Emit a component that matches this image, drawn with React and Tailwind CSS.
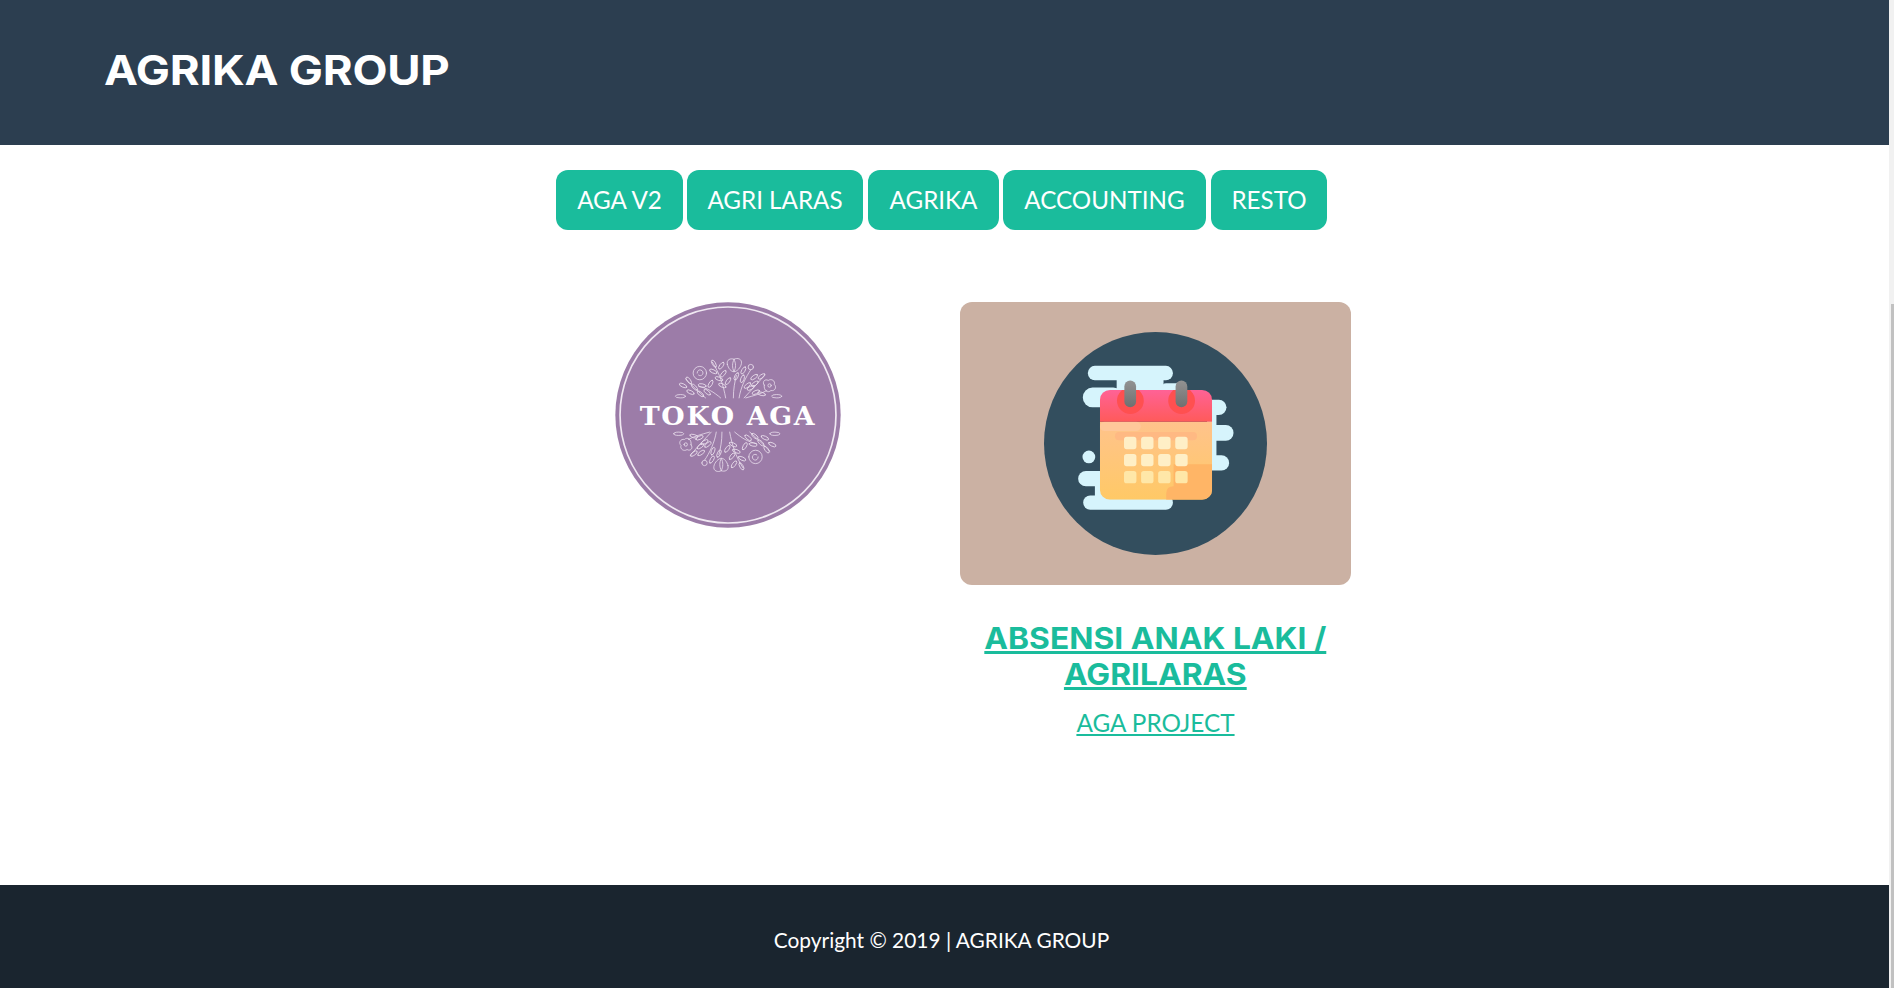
import React from "react";

const lato = "font-['Lato',sans-serif]";
const head = "font-['Inter',sans-serif]";

const leaves = [
  [340, 220, 60], [362, 226, -55], [338, 243, 25], [368, 250, -50], [355, 265, 20], [382, 272, -55], [365, 285, 25],
  [407, 258, -65],
  [428, 240, -60], [425, 265, -70], [460, 260, -35], [440, 285, -40],
  [482, 258, -35], [462, 280, -35], [450, 292, -30],
  [265, 270, 55], [248, 285, 25], [282, 290, 45], [270, 305, 25], [300, 310, 40],
  [305, 285, 10], [330, 280, -60], [320, 305, 40],
  [465, 305, -25], [482, 310, 15],
];

function FloralHalf() {
  return (
    <g fill="none" stroke="#e9deec" strokeWidth="2.4" strokeLinecap="round">
      <path d="M375 322C368 285 358 250 335 215" />
      <path d="M398 322C398 295 402 275 407 255" />
      <path d="M415 322C420 290 435 260 450 238" />
      <path d="M430 322C450 300 470 280 490 255" />
      <path d="M315 322C295 305 275 285 255 265" />
      <path d="M360 322C340 305 320 292 295 288" />
      <path d="M435 322C460 315 480 310 498 300" />
      {leaves.map(([x, y, r], i) => (
        <ellipse key={i} cx={x} cy={y} rx="12" ry="5" transform={`rotate(${r} ${x} ${y})`} />
      ))}
      <circle cx="298" cy="248" r="20" />
      <path d="M290 248c0-7 6-11 11-9 6 2 8 8 5 13-3 4-9 5-12 2" />
      <path d="M380 222c-4-15 11-19 20-15 10-6 25-1 22 13-2 12-14 24-22 24-9 0-17-10-20-22Z" />
      <path d="M400 207c-6 12-6 24 0 37 6-13 6-25 0-37Z" />
      <circle cx="450" cy="230" r="8" />
      <path d="M490 284c-8-10 3-20 12-14 10-7 22 2 18 12 9 8 1 21-10 18-8 8-22 2-20-16Z" />
      <circle cx="506" cy="285" r="5" />
      <ellipse cx="240" cy="317" rx="15" ry="5" />
      <ellipse cx="527" cy="317" rx="15" ry="5" />
    </g>
  );
}

function TokoAgaLogo() {
  return (
    <svg width="226" height="226" viewBox="45 36 674 674" className="block">
      <circle cx="382" cy="373" r="336" fill="#9c7ca8" />
      <circle cx="382" cy="373" r="322" fill="none" stroke="#f0e8f2" strokeWidth="5" />
      <FloralHalf />
      <g transform="rotate(180 381 373)">
        <FloralHalf />
      </g>
      <text
        x="382"
        y="404"
        textAnchor="middle"
        fill="#ffffff"
        fontFamily="'DejaVu Serif','Liberation Serif',serif"
        fontWeight="700"
        fontSize="80"
        letterSpacing="5"
      >
        TOKO AGA
      </text>
    </svg>
  );
}

function CalendarIcon() {
  const xs = [312, 363, 414, 465];
  const ys = [350, 401, 452];
  return (
    <svg width="223" height="223" viewBox="73 37 666 666" className="block">
      <defs>
        <linearGradient id="top" x1="0" y1="0" x2="0" y2="1">
          <stop offset="0" stopColor="#ff6296" />
          <stop offset="1" stopColor="#ff5a5a" />
        </linearGradient>
        <linearGradient id="body" x1="0" y1="0" x2="0" y2="1">
          <stop offset="0" stopColor="#ffc38c" />
          <stop offset="1" stopColor="#ffc966" />
        </linearGradient>
        <linearGradient id="pin" x1="0" y1="0" x2="0" y2="1">
          <stop offset="0" stopColor="#929292" />
          <stop offset="1" stopColor="#707070" />
        </linearGradient>
        <clipPath id="cal">
          <rect x="240" y="210" width="335" height="328" rx="30" />
        </clipPath>
      </defs>
      <circle cx="406" cy="370" r="333" fill="#334e5e" />
      <g fill="#d6f4fc">
        <rect x="204" y="138" width="254" height="43" rx="21" />
        <rect x="290" y="170" width="140" height="50" />
        <rect x="189" y="203" width="120" height="59" rx="29" />
        <rect x="423" y="190" width="60" height="30" rx="15" />
        <rect x="550" y="239" width="68" height="46" rx="23" />
        <rect x="550" y="315" width="89" height="47" rx="23" />
        <rect x="550" y="405" width="76" height="46" rx="23" />
        <rect x="560" y="262" width="28" height="166" />
        <circle cx="207" cy="410" r="19" />
        <rect x="175" y="452" width="100" height="46" rx="23" />
        <rect x="190" y="525" width="268" height="43" rx="21" />
        <rect x="225" y="480" width="40" height="60" />
      </g>
      <g clipPath="url(#cal)">
        <rect x="240" y="305" width="335" height="233" fill="url(#body)" />
        <rect x="240" y="305" width="122" height="28" rx="14" fill="#ffc89a" />
        <rect x="285" y="336" width="245" height="24" rx="12" fill="#ffb983" />
        <path d="M460 432H575V538H438V520Q438 498 460 498Z" fill="#ffb566" />
        <rect x="240" y="210" width="335" height="95" fill="url(#top)" />
        <circle cx="331" cy="242" r="40" fill="#ff5050" />
        <circle cx="484" cy="242" r="40" fill="#ff5050" />
      </g>
      <rect x="313" y="182" width="35" height="80" rx="17.5" fill="url(#pin)" />
      <rect x="466" y="182" width="35" height="80" rx="17.5" fill="url(#pin)" />
      {ys.map((y, row) =>
        xs.map((x) => (
          <rect key={`${x}-${y}`} x={x} y={y} width="37" height="37" rx="8" fill={row === 2 ? "#ffe7a8" : "#ffefc6"} />
        ))
      )}
    </svg>
  );
}

const buttons = [
  ["AGA V2", "w-[127px]", "mr-[4px]"],
  ["AGRI LARAS", "w-[176px]", "mr-[5px]"],
  ["AGRIKA", "w-[131px]", "mr-[4px]"],
  ["ACCOUNTING", "w-[203px]", "mr-[5px]"],
  ["RESTO", "w-[116px]", ""],
];

export default function App() {
  return (
    <div className={`flex h-[988px] w-[1894px] overflow-hidden bg-white ${lato}`}>
      <div className="flex w-[1889px] flex-col">
        <header className="flex h-[145px] shrink-0 items-center bg-[#2c3e50] pb-[5px] pl-[104px]">
          <h1 className={`origin-left scale-x-[1.11] text-[41px] leading-[48px] font-bold tracking-[-0.2px] text-white ${head}`}>AGRIKA GROUP</h1>
        </header>

        <main className="flex flex-1 flex-col items-center pr-[6px]">
          <nav className="mt-[25px] flex">
            {buttons.map(([label, w, m]) => (
              <a
                key={label}
                className={`flex h-[60px] items-center justify-center rounded-[12px] bg-[#1abc9c] text-[24.2px] text-white ${w} ${m}`}
              >
                {label}
              </a>
            ))}
          </nav>

          <section className="mt-[72px] flex w-[856px]">
            <div className="flex w-[428px] justify-center">
              <TokoAgaLogo />
            </div>
            <div className="flex w-[428px] flex-col items-center">
              <div className="flex h-[283px] w-[391px] items-center justify-center rounded-[12px] bg-[#cbb1a3]">
                <CalendarIcon />
              </div>
              <a className={`mt-[35px] scale-x-[1.06] text-center text-[30px] leading-[36px] font-bold text-[#1abc9c] underline ${head}`}>
                ABSENSI ANAK LAKI /
                <br />
                AGRILARAS
              </a>
              <a className="mt-[13px] text-[24.3px] leading-[36px] text-[#1abc9c] underline">AGA PROJECT</a>
            </div>
          </section>
        </main>

        <footer className="flex h-[103px] shrink-0 items-start justify-center bg-[#1a252f] pt-[40px] pr-[6px]">
          <p className="text-[20.9px] leading-[30px] text-white">Copyright © 2019 | AGRIKA GROUP</p>
        </footer>
      </div>
      <div className="flex w-[5px] flex-col items-end bg-[#f1f1f1] pt-[304px]">
        <div className="w-[3px] flex-1 bg-[#c1c1c1]" />
      </div>
    </div>
  );
}
